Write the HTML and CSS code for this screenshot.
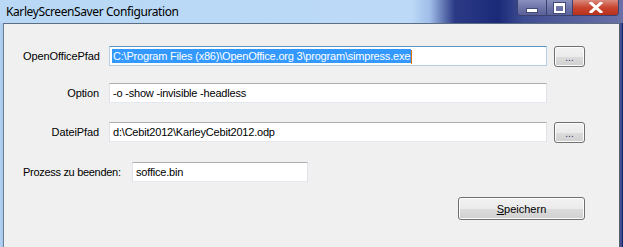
FILE: index.html
```html
<!DOCTYPE html>
<html lang="de">
<head>
    <meta charset="UTF-8">
    <title>KarleyScreenSaver Configuration</title>
    <link rel="stylesheet" href="styles.css">
</head>
<body>
    <div class="window">
        <!-- Title bar -->
        <div class="titlebar">
            <span class="title">KarleyScreenSaver Configuration</span>
            <div class="caption-buttons">
                <div class="cap-btn cap-min"><span class="min-glyph"></span></div>
                <div class="cap-btn cap-max"><span class="max-glyph"></span></div>
                <div class="cap-btn cap-close">
                    <svg width="14" height="11" viewBox="0 0 14 11">
                        <path d="M2 1 L12 10 M12 1 L2 10" stroke="#fff" stroke-width="3" stroke-linecap="square"/>
                    </svg>
                </div>
            </div>
        </div>

        <!-- Client area -->
        <div class="frame">
            <div class="client">
                <div class="row row-first">
                    <label class="label">OpenOfficePfad</label>
                    <div class="field field-focus"><span class="selected">C:\Program Files (x86)\OpenOffice.org 3\program\simpress.exe</span><span class="caret"></span></div>
                    <button type="button" class="btn btn-browse">...</button>
                </div>
                <div class="row row-option">
                    <label class="label">Option</label>
                    <div class="field">-o -show -invisible -headless</div>
                </div>
                <div class="row row-datei">
                    <label class="label">DateiPfad</label>
                    <div class="field">d:\Cebit2012\KarleyCebit2012.odp</div>
                    <button type="button" class="btn btn-browse">...</button>
                </div>
                <div class="row row-prozess">
                    <label class="label-wide">Prozess zu beenden:</label>
                    <div class="field field-short">soffice.bin</div>
                </div>
                <div class="row row-save">
                    <button type="button" class="btn btn-save"><u>S</u>peichern</button>
                </div>
            </div>
        </div>
    </div>
</body>
</html>
```

FILE: styles.css
```css
body {
    margin: 0;
    width: 623px;
    height: 247px;
    overflow: hidden;
    font-family: "Liberation Sans", Arial, sans-serif;
    font-size: 11px;
    color: #000;
}
.window {
    height: 247px;
    display: flex;
    flex-direction: column;
    background: linear-gradient(90deg, #b8d8f6 0%, #bcdaf7 66%, #9fbde8 69%, #2c3a86 73%, #1b2a78 80%, #3f4d92 84%, #6b71a6 100%);
}
.titlebar {
    height: 23px;
    display: flex;
    align-items: flex-start;
    justify-content: space-between;
    flex-shrink: 0;
}
.title {
    font-family: "Noto Sans", "Open Sans", sans-serif;
    font-size: 12px;
    color: #000;
    margin: 3px 0 0 6px;
    letter-spacing: -0.4px;
}
.caption-buttons {
    display: flex;
    margin-right: 4px;
    height: 15px;
    border: 1px solid #3b4270;
    border-top: none;
    border-radius: 0 0 4px 4px;
    overflow: hidden;
}
.cap-btn {
    display: flex;
    align-items: center;
    justify-content: center;
    height: 15px;
}
.cap-min, .cap-max {
    width: 28px;
    background: linear-gradient(#8a90bd, #6e75a9 50%, #5a6199);
    border-right: 1px solid #3b4270;
}
.cap-max {
    width: 25px;
}
.cap-close {
    width: 45px;
    background: linear-gradient(#d98a7c, #c9452f 50%, #b8301c);
}
.min-glyph {
    width: 10px;
    height: 3px;
    margin-top: 5px;
    background: #fff;
    border: 1px solid #444b78;
}
.max-glyph {
    width: 7px;
    height: 5px;
    border: 2px solid #fff;
    border-top-width: 3px;
    outline: 1px solid #444b78;
}
.frame {
    flex: 1;
    display: flex;
    padding-left: 3px;
    padding-right: 3px;
    background: linear-gradient(90deg, #b0d2f2 0, #a7c8ec 3px, transparent 3px, transparent 620px, #16206a 620px, #6d7ab8 621px, #16206a 622px);
}
.client {
    flex: 1;
    background: #f0f0f0;
    border-left: 1px solid #6d7f96;
    border-top: 1px solid #5d6d84;
    border-right: 1px solid #55606f;
    padding: 22px 0 0 19px;
}
.row {
    display: flex;
    align-items: center;
    height: 20px;
}
.row-option {
    margin-top: 17px;
}
.row-datei {
    margin-top: 19px;
}
.row-prozess {
    margin-top: 20px;
}
.row-save {
    margin-top: 15px;
    height: 23px;
    justify-content: flex-end;
    padding-right: 34px;
}
.label {
    width: 76px;
    text-align: right;
    margin-right: 10px;
    white-space: nowrap;
    letter-spacing: -0.1px;
}
.label-wide {
    width: 109px;
    white-space: nowrap;
    letter-spacing: -0.3px;
}
.field {
    box-sizing: border-box;
    width: 438px;
    height: 20px;
    padding: 0 3px;
    line-height: 18px;
    background: #fff;
    border: 1px solid #e2e3ea;
    border-top-color: #abadb3;
    border-bottom-color: #e3e9ef;
    white-space: nowrap;
    overflow: hidden;
    font-size: 11px;
    letter-spacing: -0.2px;
}
.field-focus {
    border-color: #b5cfe7;
    border-top-color: #5b92c5;
    padding-left: 2px;
}
.field-short {
    width: 176px;
}
.selected {
    background: #3399ff;
    color: #fff;
    padding: 1px 1px 1px 1px;
}
.caret {
    display: inline-block;
    width: 1px;
    height: 14px;
    background: #e07000;
    vertical-align: middle;
}
.btn {
    font-family: "Liberation Sans", Arial, sans-serif;
    font-size: 11px;
    color: #000;
    border: 1px solid #707070;
    border-radius: 3px;
    background: linear-gradient(#f2f2f2 0, #ebebeb 50%, #dddddd 50%, #cfcfcf 100%);
    box-shadow: inset 0 0 0 1px #fcfcfc;
    padding: 0;
}
.btn-browse {
    width: 31px;
    height: 21px;
    margin-left: 7px;
    line-height: 18px;
    padding-top: 2px;
    color: #303060;
    font-size: 10px;
}
.btn-save {
    width: 127px;
    height: 23px;
}
```
